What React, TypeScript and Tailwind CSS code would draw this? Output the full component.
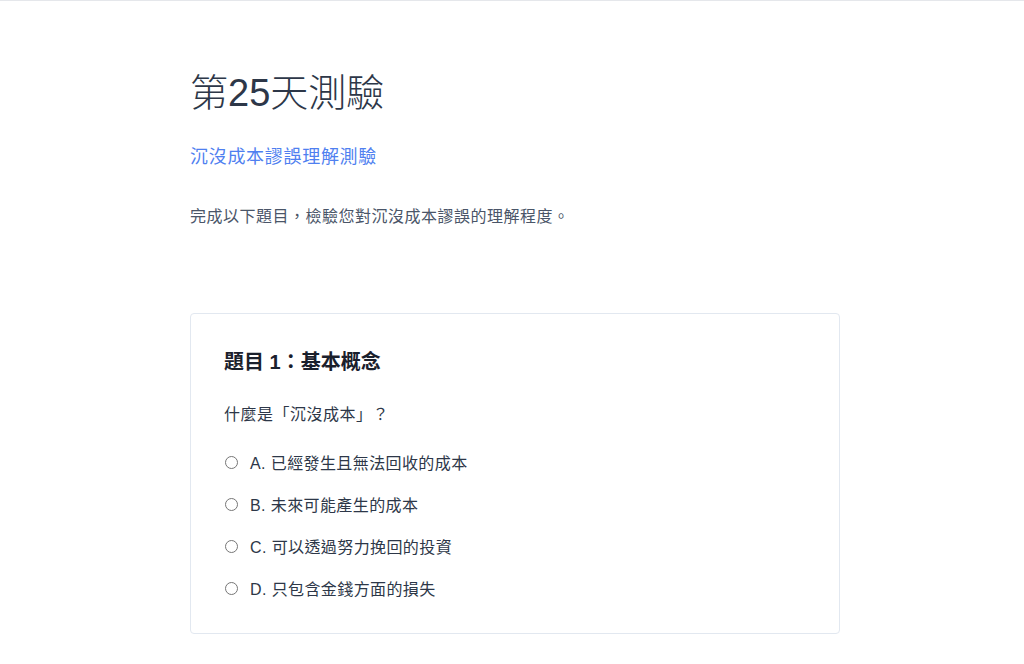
import React from "react";

const options = [
  "A. 已經發生且無法回收的成本",
  "B. 未來可能產生的成本",
  "C. 可以透過努力挽回的投資",
  "D. 只包含金錢方面的損失",
];

export default function App() {
  return (
    <div
      className="min-h-[664px] bg-white border-t border-[#e5e7eb]"
      style={{ fontFamily: '"Liberation Sans", "Noto Sans CJK TC", sans-serif' }}
    >
      <div className="ml-[190px] w-[650px] pt-[66px]">
        <h1 className="text-[38px] leading-[52px] font-light text-[#2d3748]">第25天測驗</h1>
        <p className="mt-[24px] text-[18px] leading-[28px] tracking-[0.7px] text-[#4f7ff0]">沉沒成本謬誤理解測驗</p>
        <p className="mt-[34px] text-[16px] leading-[24px] tracking-[0.5px] text-[#4a5568]">
          完成以下題目，檢驗您對沉沒成本謬誤的理解程度。
        </p>
        <div className="mt-[84px] border border-[#e2e8f0] rounded-[4px] px-[33px] pt-[34px] pb-[31px]">
          <h2 className="text-[20px] leading-[28px] font-bold text-[#1a202c]">題目 1：基本概念</h2>
          <p className="mt-[27px] text-[16px] leading-[24px] tracking-[0.5px] text-[#2d3748]">什麼是「沉沒成本」？</p>
          <div className="mt-[25px] flex flex-col gap-[18px]">
            {options.map((o) => (
              <label key={o} className="flex items-center text-[16px] leading-[24px] tracking-[0.4px] text-[#2d3748]">
                <span className="ml-[1px] w-[13px] h-[13px] rounded-full border border-[#767676] bg-white mb-[4px]" />
                <span className="ml-[12px]">{o}</span>
              </label>
            ))}
          </div>
        </div>
      </div>
    </div>
  );
}
